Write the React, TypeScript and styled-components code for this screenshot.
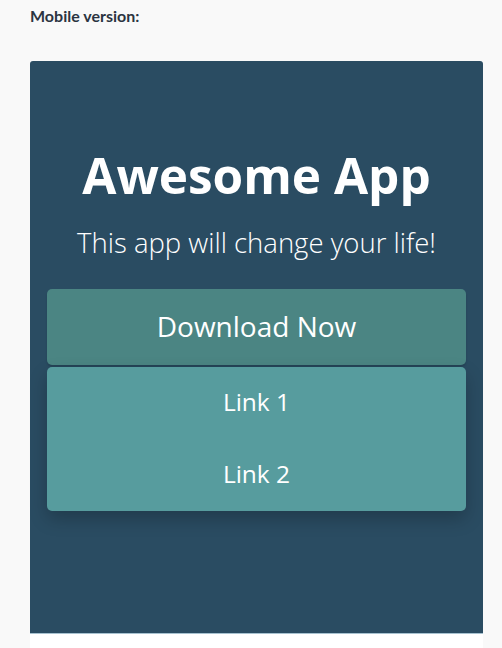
import React from "react";
import styled, { createGlobalStyle } from "styled-components";

const Global = createGlobalStyle`
  html, body { margin: 0; padding: 0; background: #f9f9f9; }
  body { font-family: "Open Sans", sans-serif; }
  * { box-sizing: border-box; }
`;

const Page = styled.div`
  padding: 6px 19px 0 30px;
  display: flex;
  flex-direction: column;
`;

const Label = styled.div`
  font-family: Lato, "Open Sans", sans-serif;
  font-weight: 700;
  font-size: 16px;
  line-height: 19px;
  color: #2b3441;
  margin-bottom: 36px;
`;

const Card = styled.div`
  background: #ffffff;
  width: 453px;
  padding-bottom: 40px;
`;

const Screen = styled.div`
  background: #2a4c62;
  height: 573px;
  border-radius: 3px 3px 0 0;
  border-bottom: 1px solid #a7c2d0;
  padding: 90px 17px 0 17px;
  display: flex;
  flex-direction: column;
  align-items: stretch;
  color: #ffffff;
`;

const Title = styled.h1`
  margin: 0;
  font-family: "Open Sans", sans-serif;
  font-weight: 700;
  font-size: 49.5px;
  line-height: 49px;
  text-align: center;
`;

const Subtitle = styled.p`
  margin: 29px 0 0 0;
  font-family: "Open Sans", sans-serif;
  font-weight: 300;
  font-size: 27.5px;
  line-height: 28px;
  text-align: center;
`;

const Download = styled.div`
  margin-top: 32px;
  height: 76px;
  padding-bottom: 2px;
  background: #4b8583;
  border-radius: 5px;
  box-shadow: 0 2px 2px rgba(0, 0, 0, 0.12);
  display: flex;
  align-items: center;
  justify-content: center;
  font-size: 28px;
  line-height: 28px;
  font-weight: 400;
`;

const Menu = styled.div`
  margin-top: 2px;
  background: #579c9e;
  border-radius: 5px;
  box-shadow: 0 8px 18px rgba(0, 0, 0, 0.22);
  display: flex;
  flex-direction: column;
`;

const MenuItem = styled.div`
  height: 72px;
  padding-bottom: 4px;
  display: flex;
  align-items: center;
  justify-content: center;
  font-size: 24.5px;
  line-height: 25px;
  font-weight: 400;
`;

export default function App() {
  return (
    <>
      <Global />
      <Page>
        <Label>Mobile version:</Label>
        <Card>
          <Screen>
            <Title>Awesome App</Title>
            <Subtitle>This app will change your life!</Subtitle>
            <Download>Download Now</Download>
            <Menu>
              <MenuItem>Link 1</MenuItem>
              <MenuItem>Link 2</MenuItem>
            </Menu>
          </Screen>
        </Card>
      </Page>
    </>
  );
}
